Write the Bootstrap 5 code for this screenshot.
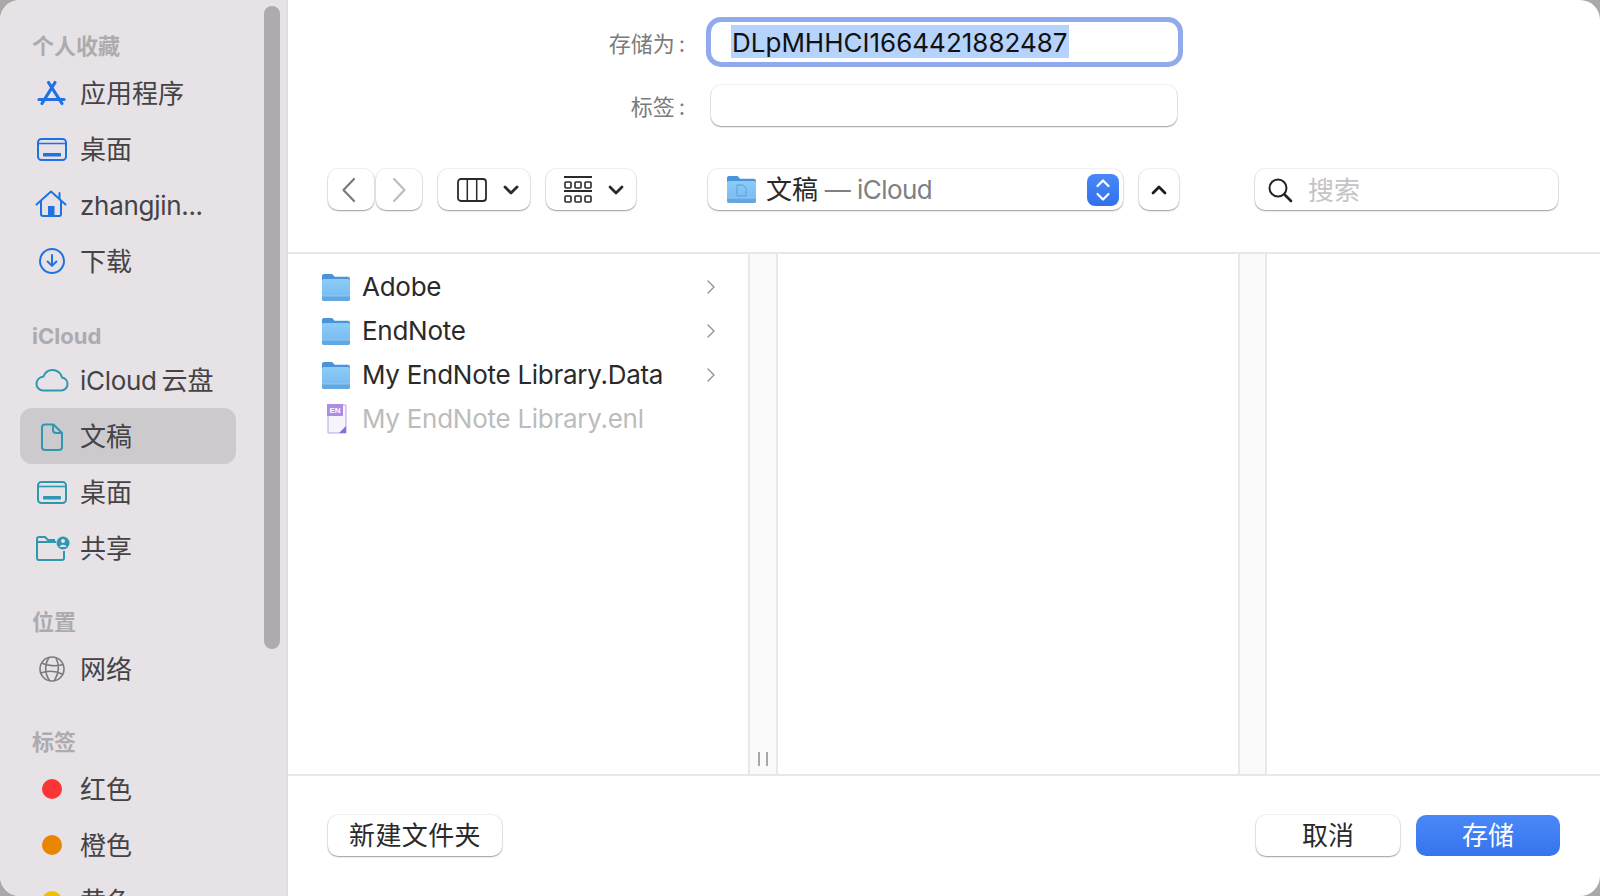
<!DOCTYPE html>
<html lang="zh">
<head>
<meta charset="utf-8">
<title>存储</title>
<link href="https://cdn.jsdelivr.net/npm/bootstrap@5.3.0/dist/css/bootstrap.min.css" rel="stylesheet">
<style>
html,body{height:896px;overflow:hidden;}
body{background:#a9a9a9;font-family:Inter,"Noto Sans CJK SC",sans-serif;color:#2a2a2a;}
.win{width:1600px;height:896px;border-radius:20px;overflow:hidden;background:#fff;}
.side{width:288px;height:896px;flex:none;background:#e6e2e6;border-right:2px solid #e0dde0;position:relative;overflow:hidden;padding-top:32px;}
.sb-thumb{position:absolute;left:264px;top:6px;width:16px;height:643px;border-radius:8px;background:#adabae;}
.side-head{height:28px;line-height:28px;padding-left:32px;font-size:22px;font-weight:700;color:#adabae;}
.h-a{margin-bottom:5px;}
.h-b{margin-top:33px;margin-bottom:2px;}
.h-c{margin-top:32px;margin-bottom:5px;}
.h-d{margin-top:31px;margin-bottom:5px;}
.side-row{height:56px;margin-left:20px;width:216px;border-radius:12px;font-size:26px;color:#454345;white-space:nowrap;}
.side-row svg{width:40px;height:32px;margin-left:12px;margin-right:8px;flex:none;}
.side-row.sel{background:#cdcacd;}
.latin{letter-spacing:-.3px;}
.ic-blue{color:#1f72e3;}
.ic-teal{color:#2f97b0;}
.ic-gray{color:#7b7b7b;}
.main-pane{min-width:0;}
.top-pane{height:254px;flex:none;border-bottom:2px solid #e8e8e8;padding:22px 42px 0 40px;}
.f-label{width:383px;padding-right:26px;padding-top:4px;text-align:right;font-size:22px;color:#7b7b7b;flex:none;}
.f-field{width:466px;background:#fff;border-radius:10px;box-shadow:0 1px 1.5px rgba(0,0,0,.35),0 0 0 1px rgba(0,0,0,.05);}
.f-name{width:467px;height:40px;padding-left:20px;font-size:26px;color:#111;box-shadow:0 0 0 5px #90aaeb;}
.f-tag{height:41px;}
.sel-text{background:#b6d3fb;line-height:30px;padding:3px 1px 0;margin-bottom:2px;display:inline-block;}
.row-tag{margin-top:23px;}
.tools{margin-top:43px;height:41px;}
.tb{height:41px;padding:0;border:0;background:#fff;border-radius:10px;box-shadow:0 1px 1.5px rgba(0,0,0,.35),0 0 0 1px rgba(0,0,0,.05);flex:none;display:flex;align-items:center;justify-content:center;color:#2a2a2a;}
.tb:hover{background:#fff;}
.tb-nav{width:46px;}
.tb-back{padding-right:4px;}
.tb-fwd{margin-left:2px;}
.tb-col{width:92px;margin-left:16px;padding-left:8px;}
.tb-grid{width:90px;margin-left:16px;padding-left:6px;}
.tb-path{width:415px;margin-left:72px;justify-content:flex-start;padding-left:19px;font-size:26px;position:relative;}
.tb-path .pf{margin-right:10px;}
.tb-up{width:40px;margin-left:16px;}
.path-sub{color:#808080;letter-spacing:-.55px;}
.stepper{position:absolute;left:379px;top:5px;width:32px;height:32px;border-radius:8px;background:linear-gradient(#4a88f8,#3071ec);display:flex;align-items:center;justify-content:center;}
.tb-search{width:303px;margin-left:76px;justify-content:flex-start;padding-left:12px;font-size:26px;color:#c4c4c4;}
.tb-search span{padding-top:2px;padding-left:7px;}
.browse{min-height:0;}
.col-a{width:460px;flex:none;padding-top:11px;}
.col-b{width:460px;flex:none;}
.rez{flex:none;background:#fafafa;border-left:2px solid #e8e8e8;border-right:2px solid #e8e8e8;position:relative;}
.rez-a{width:30px;}
.rez-b{width:29px;}
.grip{position:absolute;left:8px;top:498px;width:10px;height:14px;border-left:2px solid #a8a8a8;border-right:2px solid #a8a8a8;}
.file-row{height:44px;padding-left:34px;padding-right:32px;font-size:26px;color:#2a2a2a;white-space:nowrap;}
.file-row .ficon{flex:none;margin-right:12px;}
.file-row .chev{margin-left:auto;flex:none;}
.file-row span{padding-bottom:2px;letter-spacing:-.27px;}
.file-dim{color:#bcbcbc;}
.foot{height:122px;flex:none;border-top:2px solid #e8e8e8;padding:39px 40px 0 40px;}
.fb{height:41px;font-size:26px;line-height:41px;padding:0;border:0;border-radius:10px;color:#2a2a2a;background:#fff;box-shadow:0 1px 1.5px rgba(0,0,0,.35),0 0 0 1px rgba(0,0,0,.05);}
.fb-new{width:174px;letter-spacing:.4px;}
.fb-act{width:144px;}
.fb-save{width:144px;margin-left:16px;color:#fff;background:linear-gradient(#4a88f8,#3674ee);box-shadow:none;}
.fb-save:hover{color:#fff;background:linear-gradient(#4a88f8,#3674ee);}
.defs-holder{position:absolute;}
</style>
</head>
<body>
<svg width="0" height="0" class="defs-holder">
<defs>
<linearGradient id="fg" x1="0" y1="0" x2="0" y2="1"><stop offset="0" stop-color="#8cccf8"/><stop offset="1" stop-color="#74b8ef"/></linearGradient>
<symbol id="folder" viewBox="0 1.500 28 24.500" preserveAspectRatio="none">
<path d="M0 4a2 2 0 0 1 2-2.500h7.500a2 2 0 0 1 1.500.7l1.500 1.800H26a2 2 0 0 1 2 2V12H0z" fill="#4a94dc"/>
<path d="M0 7.500a1.500 1.500 0 0 1 1.500-1.500h25A1.500 1.500 0 0 1 28 7.500V24a2 2 0 0 1-2 2H2a2 2 0 0 1-2-2z" fill="url(#fg)"/>
<path d="M0 21.500h28v2.500a2 2 0 0 1-2 2H2a2 2 0 0 1-2-2z" fill="#64a7e0"/>
<path d="M0 21.500h28" stroke="#94cdf6" stroke-width=".8"/>
</symbol>
<symbol id="desk" viewBox="0 0 40 32">
<rect x="6" y="6" width="28" height="21" rx="3.500" fill="none" stroke="currentColor" stroke-width="2"/>
<path d="M6 10.500h28" stroke="currentColor" stroke-width="1.600"/>
<rect x="11" y="20" width="18" height="3.600" rx=".8" fill="currentColor"/>
</symbol>
</defs>
</svg>
<div class="win d-flex">
  <aside class="side">
    <div class="side-head h-a">个人收藏</div>
    <div class="side-row d-flex align-items-center"><svg viewBox="0 0 40 32" class="ic-blue"><path d="M23 5.500 10 26.500M16.500 5.500 30 26.500" fill="none" stroke="currentColor" stroke-width="3.200" stroke-linecap="round"/><path d="M7 22.500h25" fill="none" stroke="currentColor" stroke-width="3.200" stroke-linecap="round"/></svg><span>应用程序</span></div>
    <div class="side-row d-flex align-items-center"><svg viewBox="0 0 40 32" class="ic-blue"><use href="#desk"/></svg><span>桌面</span></div>
    <div class="side-row d-flex align-items-center"><svg viewBox="0 0 40 32" class="ic-blue"><path d="M4.500 15.500 19 2.500l14.500 13M27.500 4v6.500M9 12.500V25a2 2 0 0 0 2 2h16a2 2 0 0 0 2-2V12.500" fill="none" stroke="currentColor" stroke-width="2" stroke-linecap="round" stroke-linejoin="round"/><rect x="16" y="17" width="6.500" height="10" fill="currentColor"/></svg><span class="latin">zhangjin...</span></div>
    <div class="side-row d-flex align-items-center"><svg viewBox="0 0 40 32" class="ic-blue"><circle cx="20" cy="16" r="12" fill="none" stroke="currentColor" stroke-width="2"/><path d="M20 10v10.500M15.600 16.500l4.400 4.400 4.400-4.400" fill="none" stroke="currentColor" stroke-width="2" stroke-linecap="round" stroke-linejoin="round"/></svg><span>下载</span></div>
    <div class="side-head h-b">iCloud</div>
    <div class="side-row d-flex align-items-center"><svg viewBox="0 0 40 32" class="ic-teal"><path d="M11 26.500H29C33 26.500 35.500 23.500 35.500 20 35.500 16.500 33 14 30 13.500 29 9 25 6 20.500 6 16 6 13 8.500 11.500 12.500 7.500 13 4.500 16 4.500 20 4.500 23.500 7.500 26.500 11 26.500Z" fill="none" stroke="currentColor" stroke-width="2"/></svg><span><span class="latin">iCloud</span>&#8201;云盘</span></div>
    <div class="side-row sel d-flex align-items-center"><svg viewBox="0 0 40 32" class="ic-teal"><path d="M13 4.500h8.500L30 13v14a3 3 0 0 1-3 3H13a3 3 0 0 1-3-3V7.500a3 3 0 0 1 3-3ZM21 5v5a3 3 0 0 0 3 3h5.500" fill="none" stroke="currentColor" stroke-width="2" stroke-linejoin="round"/></svg><span>文稿</span></div>
    <div class="side-row d-flex align-items-center"><svg viewBox="0 0 40 32" class="ic-teal"><use href="#desk"/></svg><span>桌面</span></div>
    <div class="side-row d-flex align-items-center"><svg viewBox="0 0 40 32" class="ic-teal"><path d="M24 10H5V7a2 2 0 0 1 2-2h6l3 3h7M5 10v16a2 2 0 0 0 2 2h23a2 2 0 0 0 2-2v-7" fill="none" stroke="currentColor" stroke-width="2" stroke-linejoin="round"/><circle cx="31" cy="11" r="6.500" fill="currentColor"/><circle cx="31" cy="9" r="2" fill="#e6e2e6"/><path d="M27.500 15a3.600 3 0 0 1 7 0z" fill="#e6e2e6"/></svg><span>共享</span></div>
    <div class="side-head h-c">位置</div>
    <div class="side-row d-flex align-items-center"><svg viewBox="0 0 40 32" class="ic-gray"><g fill="none" stroke="currentColor" stroke-width="1.600"><circle cx="20" cy="16" r="12"/><path d="M9.500 10c6 3 15 3.500 21.500 1.500M8.500 20c7-2.500 15-2.500 22.500 1.500M17 4.500c-4.500 7-4.500 16 .5 23M24 5c3.500 7 3 15-1.500 22.500"/></g></svg><span>网络</span></div>
    <div class="side-head h-d">标签</div>
    <div class="side-row d-flex align-items-center"><svg viewBox="0 0 40 32"><circle cx="20" cy="16" r="10" fill="#fb3434"/></svg><span>红色</span></div>
    <div class="side-row d-flex align-items-center"><svg viewBox="0 0 40 32"><circle cx="20" cy="16" r="10" fill="#ea8500"/></svg><span>橙色</span></div>
    <div class="side-row d-flex align-items-center"><svg viewBox="0 0 40 32"><circle cx="20" cy="16" r="10" fill="#efbf09"/></svg><span>黄色</span></div>
    <div class="sb-thumb"></div>
  </aside>
  <main class="main-pane flex-grow-1 d-flex flex-column">
    <div class="top-pane">
      <div class="d-flex align-items-center"><div class="f-label">存储为&#8201;:</div><div class="f-field f-name d-flex align-items-center"><span class="sel-text">DLpMHHCI1664421882487</span></div></div>
      <div class="d-flex align-items-center row-tag"><div class="f-label">标签&#8201;:</div><div class="f-field f-tag"></div></div>
      <div class="tools d-flex">
        <button class="btn tb tb-nav tb-back" type="button" aria-label="后退"><svg width="18" height="26" viewBox="0 0 18 26"><path d="M14 2 3.500 13 14 24" fill="none" stroke="#7a7a7a" stroke-width="2.200" stroke-linecap="round" stroke-linejoin="round"/></svg></button>
        <button class="btn tb tb-nav tb-fwd" type="button" aria-label="前进"><svg width="18" height="26" viewBox="0 0 18 26"><path d="M4 2l10.500 11L4 24" fill="none" stroke="#bdbdbd" stroke-width="2.200" stroke-linecap="round" stroke-linejoin="round"/></svg></button>
        <button class="btn tb tb-col" type="button" aria-label="分栏"><svg width="30" height="24" viewBox="0 0 30 24" class="me-3"><rect x="1" y="1" width="28" height="22" rx="3" fill="none" stroke="#2a2a2a" stroke-width="1.800"/><path d="M10.300 1v22M19.700 1v22" stroke="#2a2a2a" stroke-width="1.500"/></svg><svg width="16" height="10" viewBox="0 0 16 10"><path d="M2 2l6 6 6-6" fill="none" stroke="#2a2a2a" stroke-width="2.800" stroke-linecap="round" stroke-linejoin="round"/></svg></button>
        <button class="btn tb tb-grid" type="button" aria-label="显示"><svg width="28" height="28" viewBox="0 0 28 28" class="me-3"><g fill="none" stroke="#2a2a2a"><path d="M0 1h28M0 15h28" stroke-width="2"/><rect x="1" y="6" width="6" height="6" rx="1" stroke-width="1.600"/><rect x="11" y="6" width="6" height="6" rx="1" stroke-width="1.600"/><rect x="21" y="6" width="6" height="6" rx="1" stroke-width="1.600"/><rect x="1" y="20" width="6" height="6" rx="1" stroke-width="1.600"/><rect x="11" y="20" width="6" height="6" rx="1" stroke-width="1.600"/><rect x="21" y="20" width="6" height="6" rx="1" stroke-width="1.600"/></g></svg><svg width="16" height="10" viewBox="0 0 16 10"><path d="M2 2l6 6 6-6" fill="none" stroke="#2a2a2a" stroke-width="2.800" stroke-linecap="round" stroke-linejoin="round"/></svg></button>
        <button class="btn tb tb-path" type="button"><svg width="29" height="27" class="pf"><use href="#folder"/><path d="M10 9h6l3 3v8h-9z" fill="none" stroke="#5f9fd6" stroke-width="1"/></svg><span>文稿<span class="path-sub"> — iCloud</span></span><span class="stepper"><svg width="16" height="26" viewBox="0 0 16 26"><path d="M2.500 9 8 3.500 13.500 9M2.500 17 8 22.500 13.500 17" fill="none" stroke="#fff" stroke-width="2.200" stroke-linecap="round" stroke-linejoin="round"/></svg></span></button>
        <button class="btn tb tb-up" type="button" aria-label="向上"><svg width="16" height="10" viewBox="0 0 16 10"><path d="M2 8l6-6 6 6" fill="none" stroke="#1c1c1c" stroke-width="2.800" stroke-linecap="round" stroke-linejoin="round"/></svg></button>
        <div class="tb tb-search"><svg width="26" height="26" viewBox="0 0 26 26" class="me-2"><circle cx="11" cy="11" r="8.500" fill="none" stroke="#222" stroke-width="2"/><path d="M17.500 17.500 24 24" stroke="#222" stroke-width="2.600" stroke-linecap="round"/></svg><span>搜索</span></div>
      </div>
    </div>
    <div class="browse flex-grow-1 d-flex">
      <div class="col-a">
        <div class="file-row d-flex align-items-center"><svg class="ficon" width="28" height="27"><use href="#folder"/></svg><span>Adobe</span><svg class="chev" width="10" height="16" viewBox="0 0 10 16"><path d="M2 2l6 6-6 6" fill="none" stroke="#8e8e8e" stroke-width="1.300" stroke-linecap="round" stroke-linejoin="round"/></svg></div>
        <div class="file-row d-flex align-items-center"><svg class="ficon" width="28" height="27"><use href="#folder"/></svg><span>EndNote</span><svg class="chev" width="10" height="16" viewBox="0 0 10 16"><path d="M2 2l6 6-6 6" fill="none" stroke="#8e8e8e" stroke-width="1.300" stroke-linecap="round" stroke-linejoin="round"/></svg></div>
        <div class="file-row d-flex align-items-center"><svg class="ficon" width="28" height="27"><use href="#folder"/></svg><span>My EndNote Library.Data</span><svg class="chev" width="10" height="16" viewBox="0 0 10 16"><path d="M2 2l6 6-6 6" fill="none" stroke="#8e8e8e" stroke-width="1.300" stroke-linecap="round" stroke-linejoin="round"/></svg></div>
        <div class="file-row file-dim d-flex align-items-center"><svg class="ficon" width="28" height="30" viewBox="0 0 28 30"><path d="M6 1h18v28H6z" fill="#f6f4fb" stroke="#b9a3ea" stroke-width="1"/><rect x="5" y="0" width="16" height="12" fill="#ab8de8"/><text x="13" y="9" font-size="8" font-weight="700" fill="#fff" text-anchor="middle" font-family="Liberation Sans">EN</text><path d="M24 22v7h-7z" fill="#8e6ae0"/></svg><span>My EndNote Library.enl</span></div>
      </div>
      <div class="rez rez-a"><span class="grip"></span></div>
      <div class="col-b"></div>
      <div class="rez rez-b"></div>
      <div class="flex-grow-1"></div>
    </div>
    <div class="foot d-flex">
      <button class="btn fb fb-new" type="button">新建文件夹</button>
      <button class="btn fb fb-act ms-auto" type="button">取消</button>
      <button class="btn fb fb-save" type="button">存储</button>
    </div>
  </main>
</div>
<script src="https://cdn.jsdelivr.net/npm/bootstrap@5.3.0/dist/js/bootstrap.bundle.min.js"></script>
</body>
</html>
